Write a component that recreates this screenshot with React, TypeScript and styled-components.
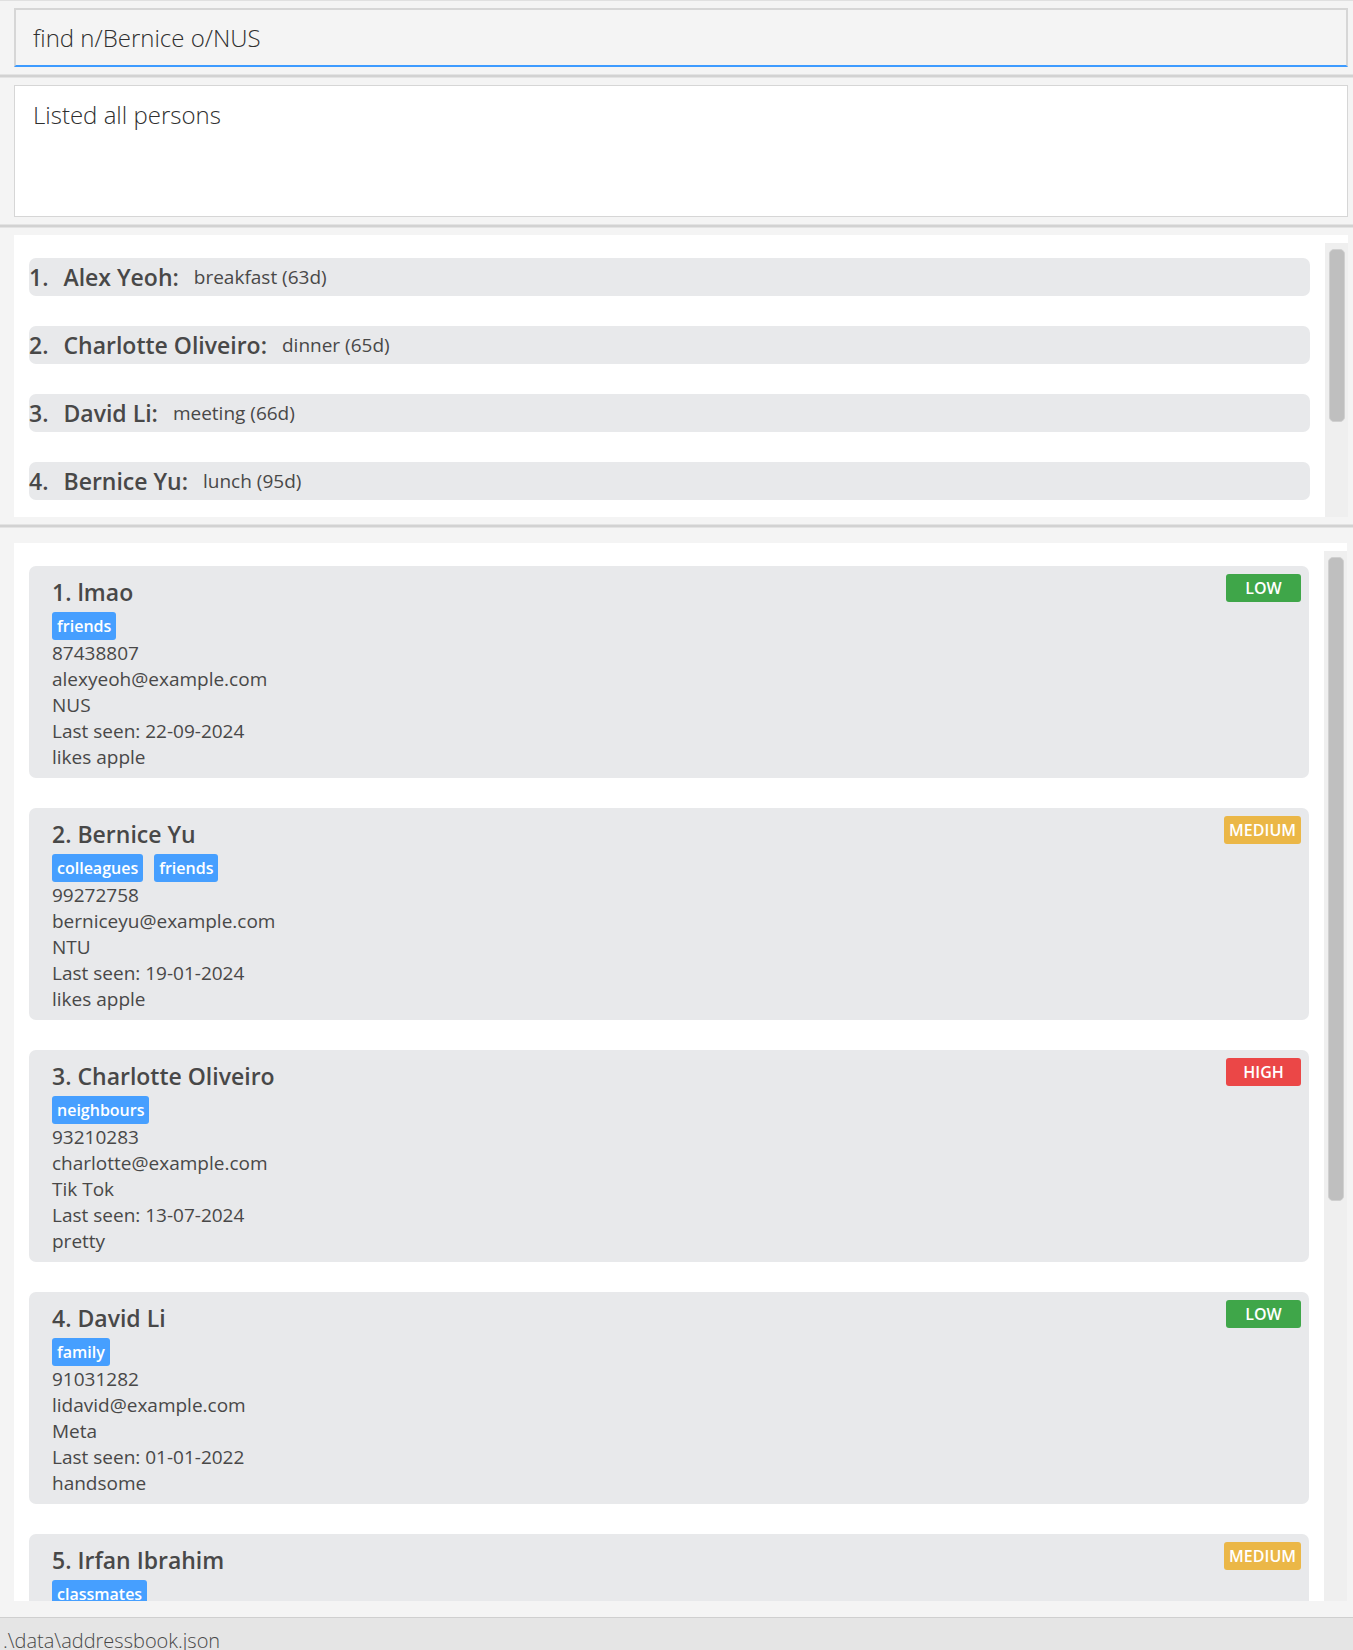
import React from "react";
import styled, { createGlobalStyle } from "styled-components";

const GlobalStyle = createGlobalStyle`
  *, *::before, *::after { box-sizing: border-box; }
  html, body { margin: 0; height: 100%; overflow: hidden; }
  body {
    background: #f4f4f4;
    color: #484848;
    font-family: "Open Sans", "Noto Sans", sans-serif;
  }
`;

const Window = styled.main`
  display: flex;
  flex-direction: column;
  height: 100vh;
  border-top: 1px solid #e0e0e0;
  background: #f4f4f4;
`;

const Pane = styled.section`
  display: flex;
  flex-shrink: 0;
  padding: 7px 5px 7px 14px;
  border-bottom: 1px solid #e3e3e3;
`;

const Divider = styled.hr`
  flex-shrink: 0;
  height: 3px;
  margin: 0;
  border: 0;
  border-bottom: 1px solid #e3e3e3;
  background: #d2d2d2;
`;

const CommandInput = styled.input`
  width: 100%;
  height: 59px;
  padding: 0 17px;
  border: 2px solid #d6d6d6;
  border-bottom: 2px solid #3d9bff;
  border-radius: 0;
  outline: 0;
  background: #f4f4f4;
  color: #2f2f2f;
  font: 300 24px/36px "Open Sans", "Noto Sans", sans-serif;
`;

const ResultBox = styled.textarea`
  display: block;
  width: 100%;
  height: 132px;
  padding: 11px 18px;
  border: 1px solid #d6d6d6;
  border-radius: 0;
  outline: 0;
  resize: none;
  overflow: hidden;
  background: #fff;
  color: #2f2f2f;
  font: 300 24px/36px "Open Sans", "Noto Sans", sans-serif;
`;

const EventsPane = styled(Pane)`
  height: 297px;
`;

const PersonsPane = styled.section`
  display: flex;
  flex: 1;
  min-height: 0;
  padding: 15px 6px 16px 14px;
`;

const ListFrame = styled.div`
  display: flex;
  flex: 1;
  min-width: 0;
  padding-top: 8px;
  overflow: hidden;
  background: #fff;
`;

const List = styled.ul`
  flex: 1;
  min-width: 0;
  margin: 0;
  padding: 0;
  overflow: hidden;
  list-style: none;
`;

const Cell = styled.li`
  padding: 15px;
`;

const Track = styled.div`
  flex-shrink: 0;
  width: 23px;
  padding: 6px 3px 6px 4px;
  background: #efefef;
`;

const Thumb = styled.div<{ $share: number }>`
  height: ${(p) => p.$share}%;
  border: 1px solid #d0d0d0;
  border-radius: 5px;
  background: #bfbfbf;
`;

const EventRow = styled.div`
  display: flex;
  align-items: center;
  gap: 15px;
  height: 38px;
  border-radius: 7px;
  background: #e8e9eb;
  white-space: nowrap;
`;

const Strong = styled.span`
  font-size: 23px;
  font-weight: 600;
`;

const Detail = styled.span`
  font-size: 19px;
`;

const Card = styled.article`
  display: flex;
  align-items: flex-start;
  justify-content: space-between;
  padding: 8px 8px 8px 23px;
  border-radius: 7px;
  background: #e8e9eb;
`;

const Name = styled.h2`
  margin: 0;
  padding-bottom: 2px;
  font-size: 23px;
  font-weight: 600;
  line-height: 36px;
`;

const Tags = styled.div`
  display: flex;
  gap: 11px;
`;

const Label = styled.span`
  padding: 0 5px;
  border-radius: 3px;
  color: #fff;
  font-size: 16px;
  font-weight: 600;
  line-height: 28px;
`;

const Tag = styled(Label)`
  background: #469fff;
`;

type Level = "LOW" | "MEDIUM" | "HIGH";
const levelColors: Record<Level, string> = {
  LOW: "#3fa649",
  MEDIUM: "#ebb747",
  HIGH: "#eb4747",
};

const Priority = styled(Label)<{ $level: Level }>`
  min-width: 75px;
  background: ${(p) => levelColors[p.$level]};
  text-align: center;
`;

const Line = styled.p`
  margin: 0;
  font-size: 19px;
  line-height: 26px;
`;

const StatusBar = styled.footer`
  flex-shrink: 0;
  height: 33px;
  padding: 5px 3px;
  overflow: hidden;
  border-top: 1px solid #cfcfcf;
  background: #e5e5e5;
  font-size: 20px;
  font-weight: 300;
  line-height: 36px;
`;

const events = [
  { name: "Alex Yeoh", detail: "breakfast (63d)" },
  { name: "Charlotte Oliveiro", detail: "dinner (65d)" },
  { name: "David Li", detail: "meeting (66d)" },
  { name: "Bernice Yu", detail: "lunch (95d)" },
];

interface Person {
  name: string;
  tags: string[];
  level: Level;
  lines: string[];
}

const persons: Person[] = [
  {
    name: "lmao",
    tags: ["friends"],
    level: "LOW",
    lines: ["87438807", "alexyeoh@example.com", "NUS", "Last seen: 22-09-2024", "likes apple"],
  },
  {
    name: "Bernice Yu",
    tags: ["colleagues", "friends"],
    level: "MEDIUM",
    lines: ["99272758", "berniceyu@example.com", "NTU", "Last seen: 19-01-2024", "likes apple"],
  },
  {
    name: "Charlotte Oliveiro",
    tags: ["neighbours"],
    level: "HIGH",
    lines: ["93210283", "charlotte@example.com", "Tik Tok", "Last seen: 13-07-2024", "pretty"],
  },
  {
    name: "David Li",
    tags: ["family"],
    level: "LOW",
    lines: ["91031282", "lidavid@example.com", "Meta", "Last seen: 01-01-2022", "handsome"],
  },
  {
    name: "Irfan Ibrahim",
    tags: ["classmates"],
    level: "MEDIUM",
    lines: [],
  },
];

export default function App() {
  return (
    <>
      <GlobalStyle />
      <Window>
        <Pane>
          <CommandInput aria-label="Command" defaultValue="find n/Bernice o/NUS" />
        </Pane>
        <Divider />
        <Pane>
          <ResultBox aria-label="Result" readOnly value="Listed all persons" />
        </Pane>
        <Divider />
        <EventsPane>
          <ListFrame>
            <List>
              {events.map((e, i) => (
                <Cell key={e.name}>
                  <EventRow>
                    <Strong>{i + 1}.</Strong>
                    <Strong>{e.name}:</Strong>
                    <Detail>{e.detail}</Detail>
                  </EventRow>
                </Cell>
              ))}
            </List>
            <Track aria-hidden="true">
              <Thumb $share={66} />
            </Track>
          </ListFrame>
        </EventsPane>
        <Divider />
        <PersonsPane>
          <ListFrame>
            <List>
              {persons.map((p, i) => (
                <Cell key={p.name}>
                  <Card>
                    <div>
                      <Name>
                        {i + 1}. {p.name}
                      </Name>
                      <Tags>
                        {p.tags.map((t) => (
                          <Tag key={t}>{t}</Tag>
                        ))}
                      </Tags>
                      {p.lines.map((l) => (
                        <Line key={l}>{l}</Line>
                      ))}
                    </div>
                    <Priority $level={p.level}>{p.level}</Priority>
                  </Card>
                </Cell>
              ))}
            </List>
            <Track aria-hidden="true">
              <Thumb $share={62} />
            </Track>
          </ListFrame>
        </PersonsPane>
        <StatusBar>.\data\addressbook.json</StatusBar>
      </Window>
    </>
  );
}
